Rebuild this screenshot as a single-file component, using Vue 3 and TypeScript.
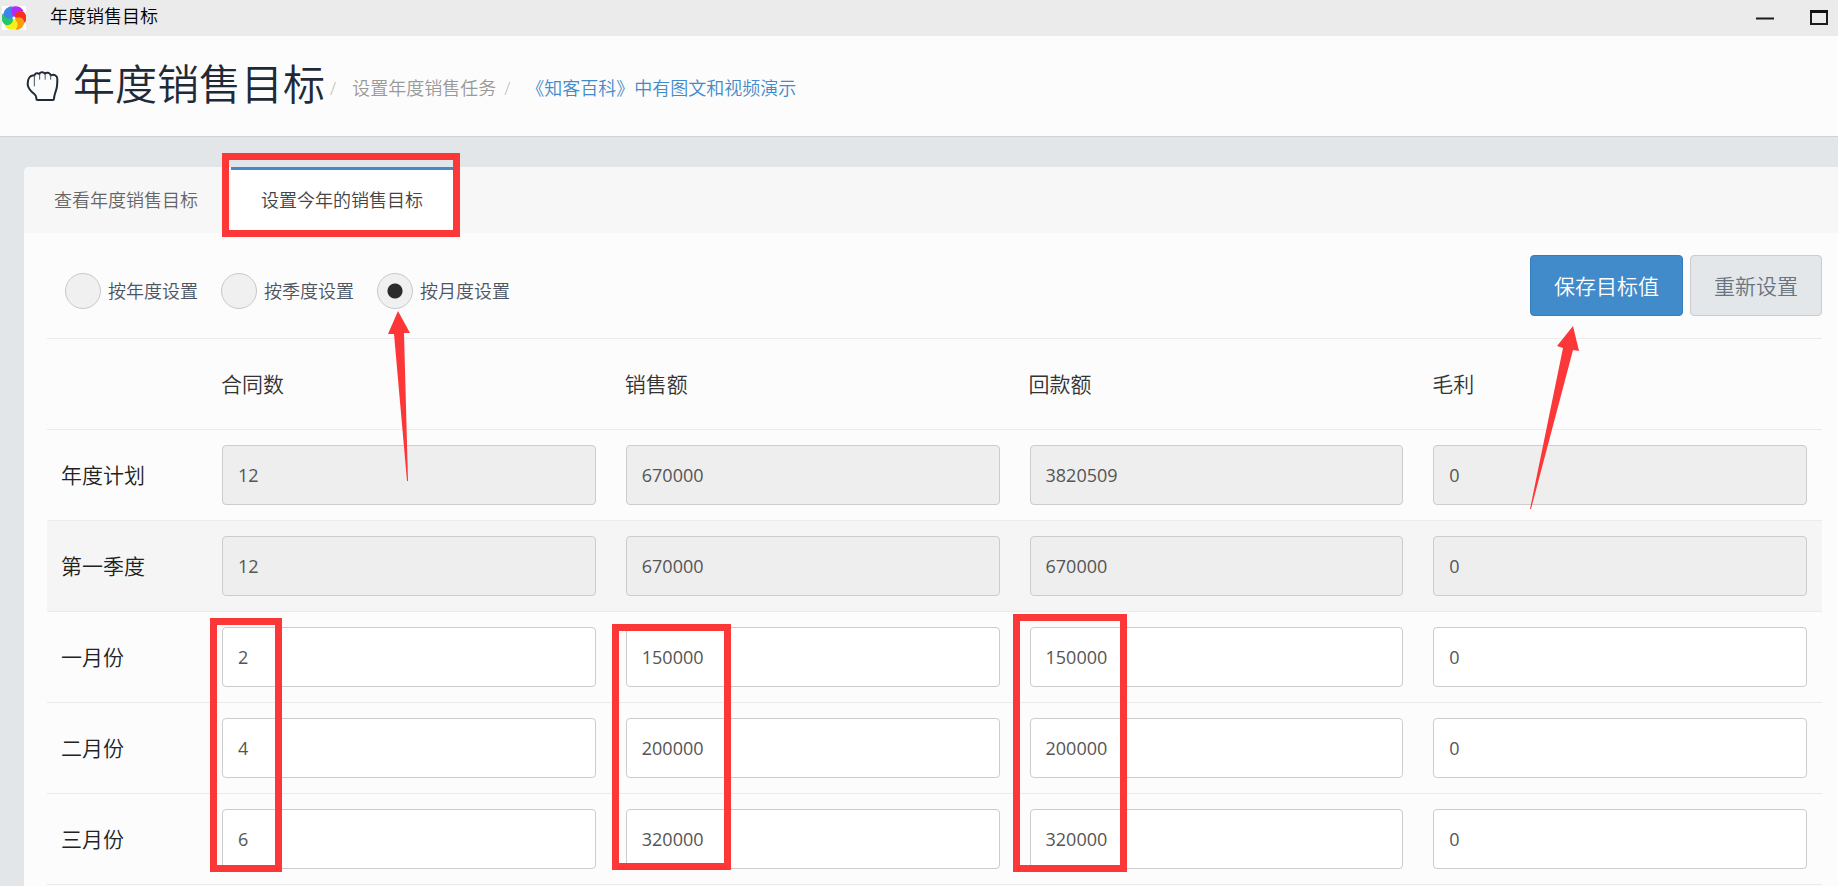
<script setup lang="ts">
import { ref, reactive } from 'vue'

interface Row {
  label: string
  values: string[]
  locked: boolean
  striped: boolean
}

const tabs = ['查看年度销售目标', '设置今年的销售目标']
const activeTab = ref(1)

const modes = ['按年度设置', '按季度设置', '按月度设置']
const mode = ref('按月度设置')

const columns = ['合同数', '销售额', '回款额', '毛利']
const initialRows = (): Row[] => [
  { label: '年度计划', values: ['12', '670000', '3820509', '0'], locked: true, striped: false },
  { label: '第一季度', values: ['12', '670000', '670000', '0'], locked: true, striped: true },
  { label: '一月份', values: ['2', '150000', '150000', '0'], locked: false, striped: false },
  { label: '二月份', values: ['4', '200000', '200000', '0'], locked: false, striped: false },
  { label: '三月份', values: ['6', '320000', '320000', '0'], locked: false, striped: false },
]
const rows = reactive(initialRows())
const reset = () => rows.splice(0, rows.length, ...initialRows())

const petals = ['#b52af0', '#f8301c', '#fb9d0a', '#f6f01a', '#27c46b', '#3f83ee']
</script>

<template>
  <div class="page">
    <div class="titlebar">
      <svg class="logo" viewBox="0 0 24 24" aria-hidden="true">
        <rect width="24" height="24" fill="#fff" />
        <path
          v-for="(color, i) in petals"
          :key="i"
          :fill="color"
          :transform="`rotate(${i * 60 - 8} 12 12)`"
          d="M12 11C8 8 8.500 2 13 0.600C17 -0.200 21.500 2.500 22.500 6.500C18.500 5.500 15 7.500 13 11.500Z"
        />
        <circle cx="12" cy="12" r="1.500" fill="#fff" />
      </svg>
      <span class="window-title">年度销售目标</span>
      <div class="window-controls">
        <button type="button" aria-label="最小化">
          <svg viewBox="0 0 20 20"><path d="M1 10.500H19" stroke="#1c1c1c" stroke-width="2" /></svg>
        </button>
        <button type="button" aria-label="最大化">
          <svg viewBox="0 0 20 20">
            <path d="M2 3V16H18V3" fill="none" stroke="#1c1c1c" stroke-width="2" />
            <path d="M1 3.500H19" stroke="#111" stroke-width="3" />
          </svg>
        </button>
      </div>
    </div>

    <header class="header">
      <svg class="hand" viewBox="78 216 99 90" aria-hidden="true">
        <path
          d="M103 229C88 229 83 243 83 254C83 266 89 272 96 279C103 285 109 288 109 296V299Q109 303 113 303H158Q162 303 162 299C162 290 166 282 169 271C172 262 172 251 172 240C172 229 162 225 152 229C150 220 139 219 135 224C130 218 120 219 118 225C111 220 103 223 103 232"
          fill="none" stroke="#1f2a38" stroke-width="6" stroke-linejoin="round"
        />
        <path d="M103 230V262M119 225V242M135.500 224V242M152 228V242" fill="none" stroke="#4a5461" stroke-width="3" />
      </svg>
      <h1>年度销售目标</h1>
      <nav class="crumbs">
        <span class="slash">/</span>
        <span class="sub">设置年度销售任务</span>
        <span class="slash">/</span>
        <a href="#">《知客百科》中有图文和视频演示</a>
      </nav>
    </header>

    <main class="panel">
      <div class="tabs" role="tablist">
        <button
          v-for="(tab, i) in tabs"
          :key="tab"
          type="button"
          role="tab"
          :aria-selected="activeTab === i"
          :class="{ active: activeTab === i }"
          @click="activeTab = i"
        >{{ tab }}</button>
      </div>

      <form class="content" @submit.prevent>
        <div class="toolbar">
          <div class="modes" role="radiogroup" aria-label="设置方式">
            <label v-for="m in modes" :key="m">
              <input v-model="mode" type="radio" name="mode" :value="m" />
              <span>{{ m }}</span>
            </label>
          </div>
          <div class="actions">
            <button type="submit" class="primary">保存目标值</button>
            <button type="button" class="plain" @click="reset">重新设置</button>
          </div>
        </div>

        <table>
          <thead>
            <tr>
              <td class="corner"></td>
              <th v-for="c in columns" :key="c" scope="col">{{ c }}</th>
            </tr>
          </thead>
          <tbody>
            <tr v-for="row in rows" :key="row.label" :class="{ striped: row.striped }">
              <th scope="row">{{ row.label }}</th>
              <td v-for="(c, i) in columns" :key="c">
                <input v-model="row.values[i]" type="text" :readonly="row.locked" :aria-label="row.label + c" />
              </td>
            </tr>
          </tbody>
        </table>
      </form>
    </main>

    <svg class="marks" aria-hidden="true">
      <g fill="none" stroke="#fb3837" stroke-width="7">
        <rect x="225.500" y="156.500" width="231" height="77" />
        <rect x="213.500" y="621.500" width="65" height="247" />
        <rect x="615.500" y="627.500" width="112" height="239" />
        <rect x="1016.500" y="617.500" width="107" height="251" />
      </g>
      <g fill="#fb3837">
        <path d="M398 311L388 334L394 334L407 481H408L404 333H410Z" />
        <path d="M1573 326L1557 346L1563 348L1530 509H1531L1573 350L1579 351Z" />
      </g>
    </svg>
  </div>
</template>

<style>
body {
  margin: 0;
  background: #e2e6e9;
}
</style>

<style scoped>
.page {
  position: relative;
  display: flex;
  flex-direction: column;
  min-height: 100vh;
  overflow: hidden;
  font-family: "Open Sans", "Noto Sans CJK SC", sans-serif;
  font-size: 18px;
  line-height: 24px;
  font-weight: 350;
  color: #555;
}
.page * {
  box-sizing: border-box;
}
button,
input {
  font: inherit;
  color: inherit;
}
button {
  cursor: pointer;
}
.titlebar {
  display: flex;
  align-items: center;
  height: 36px;
  padding: 0 9px 0 2px;
  background: #ebebeb;
}
.logo {
  width: 24px;
  height: 24px;
  margin-right: 24px;
}
.window-title {
  color: #000;
  padding-bottom: 4px;
}
.window-controls {
  display: flex;
  gap: 34px;
  margin-left: auto;
}
.window-controls button {
  display: flex;
  padding: 0;
  border: 0;
  background: none;
}
.window-controls svg {
  width: 20px;
  height: 20px;
}
.header {
  display: flex;
  align-items: center;
  height: 101px;
  padding: 0 26px;
  background: #fcfcfc;
  border-bottom: 1px solid #cfd3d6;
}
.hand {
  width: 33px;
  height: 30px;
  margin-right: 14px;
}
h1 {
  margin: 0;
  padding-bottom: 4px;
  font-size: 42px;
  line-height: 56px;
  font-weight: 350;
  color: #1f2a38;
}
.crumbs {
  display: flex;
  padding-top: 3px;
}
.slash {
  margin-left: 5px;
  color: #bbb;
}
.sub {
  margin-left: 16px;
  color: #999;
}
.sub + .slash {
  margin-left: 8px;
}
a {
  margin-left: 16px;
  color: #428bca;
  text-decoration: none;
}
.panel {
  flex: 1;
  margin: 30px 0 0 24px;
  background: #fcfcfc;
  border-top-left-radius: 5px;
}
.tabs {
  display: flex;
  gap: 3px;
  height: 66px;
  background: #f7f7f7;
  border-top-left-radius: 5px;
}
.tabs button {
  padding: 0 30px 3px;
  border: 0;
  border-top: 3px solid transparent;
  background: none;
  color: #666;
}
.tabs .active {
  border-top-color: #428bca;
  background: #fff;
  color: #444;
}
.content {
  padding: 0 16px 0 23px;
}
.toolbar {
  display: flex;
  justify-content: space-between;
  align-items: flex-end;
  padding: 22px 0;
}
.modes {
  display: flex;
  gap: 23px;
  padding: 0 0 7px 18px;
  color: #4b5563;
}
.modes label {
  display: flex;
  align-items: center;
  gap: 7px;
}
.modes input {
  appearance: none;
  width: 36px;
  height: 36px;
  margin: 0;
  border: 1px solid #c8c8c8;
  border-radius: 50%;
  background: #f0f0f0;
}
.modes input:checked {
  background: radial-gradient(circle, #2b2b2b 7px, #f0f0f0 8px);
}
.actions {
  display: flex;
  gap: 7px;
}
.actions button {
  height: 61px;
  padding: 0 23px;
  border: 1px solid #ccc;
  border-radius: 4px;
  font-size: 21px;
}
.actions .primary {
  background: #428bca;
  border-color: #357ebd;
  color: #fff;
}
.actions .plain {
  background: #e3e7ea;
  color: #68747f;
}
table {
  width: 100%;
  table-layout: fixed;
  border-spacing: 0;
  border-bottom: 1px solid #ebebeb;
}
th,
td {
  height: 91px;
  padding: 15px;
  border-top: 1px solid #ebebeb;
  text-align: left;
  font-weight: 350;
}
th {
  padding-left: 14px;
  font-size: 21px;
  color: #333;
}
tbody th {
  color: #222;
}
.corner {
  width: 160px;
}
.striped {
  background: #f5f5f5;
}
td input {
  display: block;
  width: 100%;
  height: 60px;
  padding: 0 15px;
  border: 1px solid #ccc;
  border-radius: 4px;
  background: #fff;
  font-weight: 400;
  color: #555;
}
td input:read-only {
  background: #eee;
}
.marks {
  position: absolute;
  top: 0;
  left: 0;
  width: 100%;
  height: 100%;
  pointer-events: none;
}
</style>
